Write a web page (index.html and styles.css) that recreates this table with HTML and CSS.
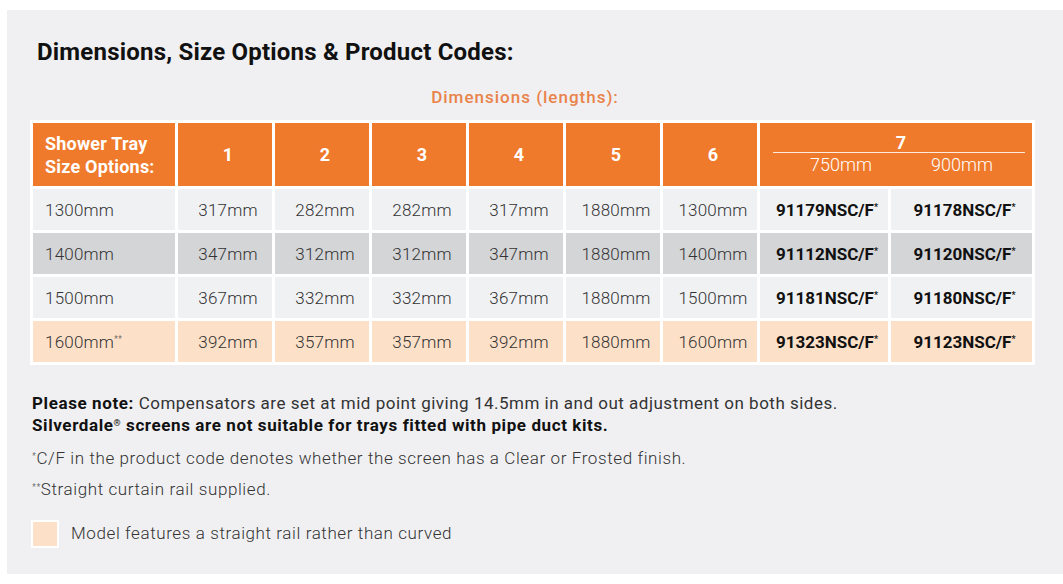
FILE: index.html
```html
<!DOCTYPE html>
<html lang="en">
<head>
<meta charset="utf-8">
<title>Dimensions, Size Options &amp; Product Codes</title>
<link rel="stylesheet" href="styles.css">
</head>
<body>
<section class="panel">
  <h2 class="title">Dimensions, Size Options &amp; Product Codes:</h2>
  <div class="subtitle">Dimensions (lengths):</div>
  <table class="dims">
    <colgroup>
      <col class="c-size">
      <col class="c-num"><col class="c-num"><col class="c-num">
      <col class="c-num"><col class="c-num"><col class="c-num">
      <col class="c-a"><col class="c-b">
    </colgroup>
    <thead>
      <tr>
        <th class="h-size">Shower Tray<br>Size Options:</th>
        <th>1</th><th>2</th><th>3</th><th>4</th><th>5</th><th>6</th>
        <th colspan="2" class="h-seven">
          <div class="seven-top">7</div>
          <div class="seven-sub"><span>750mm</span><span>900mm</span></div>
        </th>
      </tr>
    </thead>
    <tbody>
      <tr class="r-light">
        <td class="size">1300mm</td>
        <td>317mm</td><td>282mm</td><td>282mm</td><td>317mm</td><td>1880mm</td><td>1300mm</td>
        <td class="code">91179NSC/F<sup>*</sup></td><td class="code">91178NSC/F<sup>*</sup></td>
      </tr>
      <tr class="r-grey">
        <td class="size">1400mm</td>
        <td>347mm</td><td>312mm</td><td>312mm</td><td>347mm</td><td>1880mm</td><td>1400mm</td>
        <td class="code">91112NSC/F<sup>*</sup></td><td class="code">91120NSC/F<sup>*</sup></td>
      </tr>
      <tr class="r-light">
        <td class="size">1500mm</td>
        <td>367mm</td><td>332mm</td><td>332mm</td><td>367mm</td><td>1880mm</td><td>1500mm</td>
        <td class="code">91181NSC/F<sup>*</sup></td><td class="code">91180NSC/F<sup>*</sup></td>
      </tr>
      <tr class="r-peach">
        <td class="size">1600mm<sup>**</sup></td>
        <td>392mm</td><td>357mm</td><td>357mm</td><td>392mm</td><td>1880mm</td><td>1600mm</td>
        <td class="code">91323NSC/F<sup>*</sup></td><td class="code">91123NSC/F<sup>*</sup></td>
      </tr>
    </tbody>
  </table>
  <div class="notes">
    <p class="note-main"><strong>Please note:</strong> Compensators are set at mid point giving 14.5mm in and out adjustment on both sides.<br><strong>Silverdale<sup>®</sup> screens are not suitable for trays fitted with pipe duct kits.</strong></p>
    <p class="note-small"><sup>*</sup>C/F in the product code denotes whether the screen has a Clear or Frosted finish.</p>
    <p class="note-small"><sup>**</sup>Straight curtain rail supplied.</p>
    <div class="legend"><span class="swatch"></span><span>Model features a straight rail rather than curved</span></div>
  </div>
</section>
</body>
</html>
```

FILE: styles.css
```css
html, body {
  margin: 0;
  padding: 0;
  background: #ffffff;
}
body {
  font-family: Roboto, "Liberation Sans", sans-serif;
  color: #333;
}
.panel {
  margin: 10px 0 0 7px;
  width: 1056px;
  box-sizing: border-box;
  background: #f0f0f2;
  padding: 28px 0 26px 23px;
}
.title {
  margin: 0 0 0 7px;
  font-size: 24px;
  line-height: 28px;
  font-weight: 700;
  letter-spacing: 0.2px;
  color: #111;
}
.subtitle {
  width: 1005px;
  box-sizing: border-box;
  padding-right: 15px;
  margin-top: 21px;
  text-align: center;
  font-size: 17px;
  line-height: 20px;
  font-weight: 500;
  letter-spacing: 1px;
  color: #e9834a;
}
.dims {
  margin-top: 13px;
  width: 1005px;
  table-layout: fixed;
  border-collapse: separate;
  border-spacing: 3px;
  background: #ffffff;
}
.c-size { width: 142px; }
.c-num { width: 94px; }
.c-a { width: 128px; }
.c-b { width: 141px; }
.dims th {
  background: #f07a2b;
  color: #fff;
  font-size: 18px;
  font-weight: 700;
  height: 63px;
  padding: 0 0 0 6px;
  text-align: center;
  vertical-align: middle;
}
.dims th.h-size {
  text-align: left;
  padding-left: 12px;
  line-height: 23px;
  letter-spacing: 0.2px;
}
.dims th.h-seven {
  padding: 0 7px 0 13px;
}
.seven-top {
  line-height: 19px;
  padding-top: 1px;
  padding-left: 4px;
  border-bottom: 1px solid rgba(255, 255, 255, 0.85);
}
.seven-sub {
  display: grid;
  grid-template-columns: 1fr 1fr;
  font-weight: 300;
  font-size: 18px;
  line-height: 24px;
}
.seven-sub span:first-child { padding-left: 10px; }
.dims td {
  height: 41px;
  padding: 0 0 0 6px;
  text-align: center;
  vertical-align: middle;
  font-size: 17px;
  font-weight: 300;
  letter-spacing: 0.2px;
  color: #333;
}
.dims td.size {
  text-align: left;
  padding-left: 12px;
}
.dims td.code {
  font-weight: 700;
  color: #111;
  letter-spacing: 0;
}
.dims sup {
  font-size: 9px;
  vertical-align: 6px;
  line-height: 0;
}
.r-light td { background: #f0f1f3; }
.r-grey td { background: #d4d5d7; }
.r-peach td { background: #fde0c8; }
.notes {
  margin-top: 27px;
  padding-left: 2px;
  font-size: 17px;
  letter-spacing: 0.5px;
  color: #333;
}
.notes p {
  margin: 0;
  line-height: 22px;
}
.notes strong {
  font-weight: 700;
  color: #111;
  letter-spacing: 0.6px;
}
.notes sup {
  font-size: 9px;
  vertical-align: 5px;
  line-height: 0;
}
.note-main { margin-bottom: 11px !important; }
.note-small { font-weight: 300; letter-spacing: 0.6px; }
.note-small + .note-small { margin-top: 9px; }
.legend {
  margin-top: 20px;
  display: flex;
  align-items: center;
  gap: 12px;
  font-size: 17px;
  font-weight: 300;
  letter-spacing: 0.6px;
  color: #333;
}
.legend span:last-child { margin-top: -2px; }
.swatch {
  width: 24px;
  height: 24px;
  background: #fde0c8;
  border: 2px solid #fff;
  margin-left: -1px;
}
```
